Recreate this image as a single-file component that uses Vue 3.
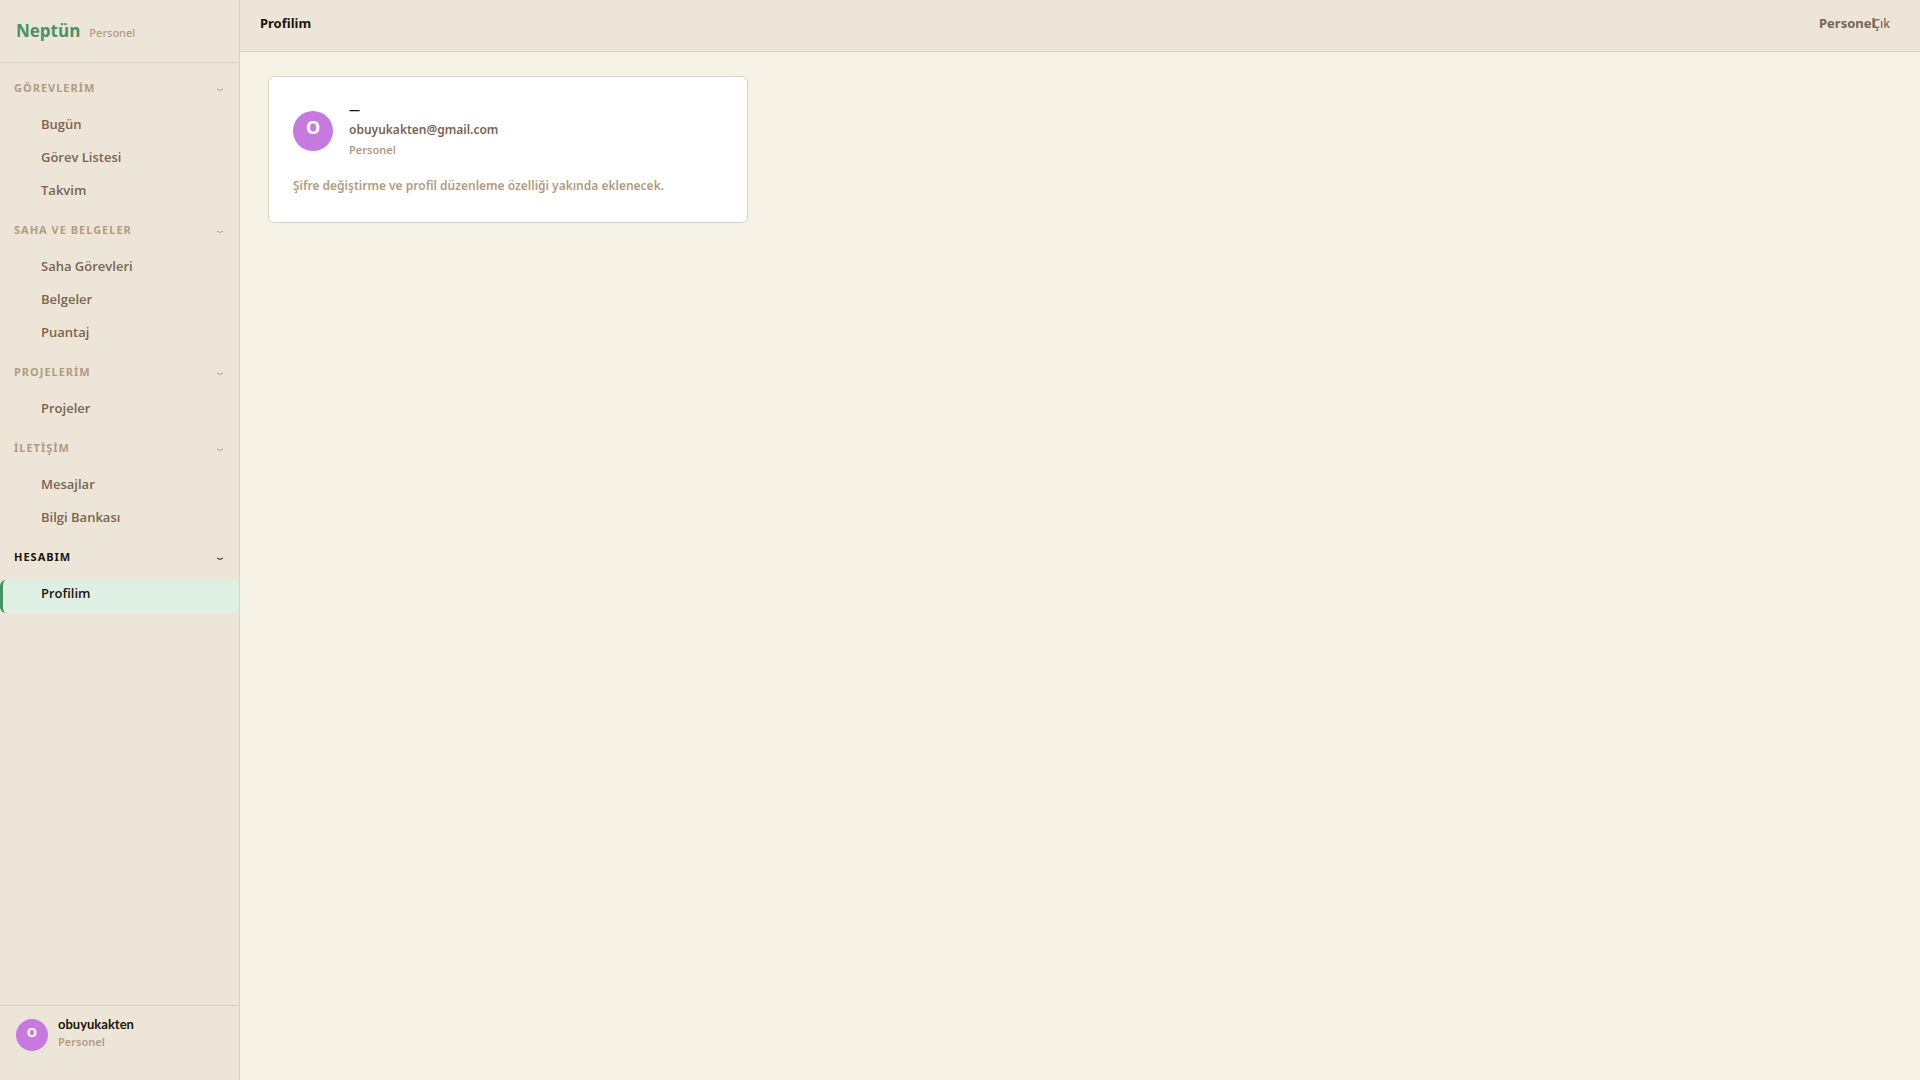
<script setup>
const sections = [
  { title: 'GÖREVLERİM', items: ['Bugün', 'Görev Listesi', 'Takvim'] },
  { title: 'SAHA VE BELGELER', items: ['Saha Görevleri', 'Belgeler', 'Puantaj'] },
  { title: 'PROJELERİM', items: ['Projeler'] },
  { title: 'İLETİŞİM', items: ['Mesajlar', 'Bilgi Bankası'] },
  { title: 'HESABIM', items: ['Profilim'] },
]
const activeItem = 'Profilim'
</script>

<template>
  <div class="shell">
    <aside class="sidebar">
      <div class="brand">
        <span class="brand-name">Neptün</span>
        <span class="brand-role">Personel</span>
      </div>
      <nav class="menu">
        <section v-for="s in sections" :key="s.title" class="group">
          <button type="button" class="group-head" :class="{ current: s.items.includes(activeItem) }">
            <span>{{ s.title }}</span>
            <svg class="chevron" width="8" height="4" viewBox="0 0 8 4" aria-hidden="true">
              <path d="M1 1 Q4 4 7 1" fill="none" stroke="currentColor" stroke-width="1" />
            </svg>
          </button>
          <a v-for="i in s.items" :key="i" href="#" class="item" :class="{ active: i === activeItem }">{{ i }}</a>
        </section>
      </nav>
      <div class="account">
        <span class="avatar small">O</span>
        <div class="account-text">
          <span class="account-name">obuyukakten</span>
          <span class="role">Personel</span>
        </div>
      </div>
    </aside>

    <div class="main">
      <header class="topbar">
        <h1>Profilim</h1>
        <div class="session">
          <span class="session-role">Personel</span>
          <button type="button" class="logout">Çık</button>
        </div>
      </header>
      <main class="content">
        <article class="card">
          <div class="profile">
            <span class="avatar">O</span>
            <div class="profile-text">
              <strong class="full-name">—</strong>
              <span class="email">obuyukakten@gmail.com</span>
              <span class="role">Personel</span>
            </div>
          </div>
          <p class="note">Şifre değiştirme ve profil düzenleme özelliği yakında eklenecek.</p>
        </article>
      </main>
    </div>
  </div>
</template>

<style>
body {
  margin: 0;
  background: #f7f2e6;
}
</style>

<style scoped>
.shell {
  display: flex;
  min-height: 100vh;
  font-family: "Noto Sans", "Open Sans", sans-serif;
  font-size: 13px;
  font-weight: 500;
  color: #1a140c;
}
.shell * {
  box-sizing: border-box;
}
button {
  padding: 0;
  border: 0;
  background: none;
  font: inherit;
  cursor: pointer;
}
.sidebar {
  display: flex;
  flex-direction: column;
  flex: none;
  width: 240px;
  background: #ede6d8;
  border-right: 1px solid #d9d2c0;
}
.brand {
  display: flex;
  align-items: baseline;
  gap: 9px;
  height: 63px;
  padding: 19px 16px 0;
  border-bottom: 1px solid #d9d2c0;
  line-height: 24px;
}
.brand-name {
  font-family: "Open Sans", sans-serif;
  font-size: 17px;
  font-weight: 700;
  color: #4a9163;
}
.brand-role {
  font-size: 11px;
  color: #b39b81;
}
.menu {
  flex: 1;
  padding-top: 8px;
}
.group {
  padding-bottom: 3px;
}
.group-head {
  display: flex;
  align-items: center;
  justify-content: space-between;
  width: 100%;
  height: 40px;
  padding: 0 15px 8px 14px;
  font-size: 11px;
  font-weight: 700;
  letter-spacing: 1px;
  color: #b39b81;
}
.group-head.current {
  color: #1a140c;
}
.chevron {
  margin-top: 5px;
}
.item {
  display: block;
  height: 33px;
  padding: 3px 16px 10px 38px;
  border-left: 3px solid transparent;
  border-radius: 6px;
  line-height: 20px;
  font-weight: 600;
  font-family: "Open Sans", sans-serif;
  color: #7a6450;
  text-decoration: none;
}
.item.active {
  background: #def0e4;
  border-left-color: #4a9163;
  color: #1a140c;
}
.account {
  display: flex;
  align-items: center;
  gap: 10px;
  height: 75px;
  padding: 0 16px 16px;
  border-top: 1px solid #d9d2c0;
}
.account-text,
.profile-text {
  display: flex;
  flex-direction: column;
}
.account-text {
  line-height: 17px;
  padding-bottom: 4px;
}
.account-name {
  font-family: Lato, sans-serif;
  font-size: 13px;
  font-weight: 700;
}
.role {
  font-size: 11px;
  font-weight: 600;
  color: #b39b81;
}
.avatar {
  display: flex;
  justify-content: center;
  flex: none;
  width: 40px;
  height: 40px;
  border-radius: 50%;
  background: #c67ade;
  color: #fff;
  font-size: 18px;
  font-weight: 700;
  line-height: 32px;
}
.avatar.small {
  width: 32px;
  height: 32px;
  font-size: 13px;
  line-height: 27px;
}
.main {
  flex: 1;
  min-width: 0;
}
.topbar {
  display: flex;
  align-items: center;
  justify-content: space-between;
  height: 52px;
  padding: 0 30px 5px 20px;
  background: #ede6d8;
  border-bottom: 1px solid #d9d2c0;
}
.topbar h1 {
  margin: 0;
  font-size: 13px;
  font-weight: 700;
}
.session {
  display: flex;
  align-items: center;
  color: #7a6450;
}
.session-role {
  font-size: 13px;
  font-weight: 700;
}
.logout {
  margin-left: -3px;
  font-size: 12px;
  color: #7a6450;
}
.content {
  padding: 24px 28px;
}
.card {
  max-width: 480px;
  padding: 24px;
  border: 1px solid #d9d2c0;
  border-radius: 6px;
  background: #fff;
}
.profile {
  display: flex;
  align-items: center;
  gap: 16px;
  height: 60px;
}
.profile-text {
  padding-bottom: 2px;
  line-height: 20px;
}
.full-name {
  font-size: 11px;
}
.email,
.note {
  font-size: 12px;
  font-weight: 600;
}
.email {
  color: #7a6450;
}
.note {
  margin: 15px 0 2px;
  line-height: 20px;
  color: #b39b81;
}
</style>
